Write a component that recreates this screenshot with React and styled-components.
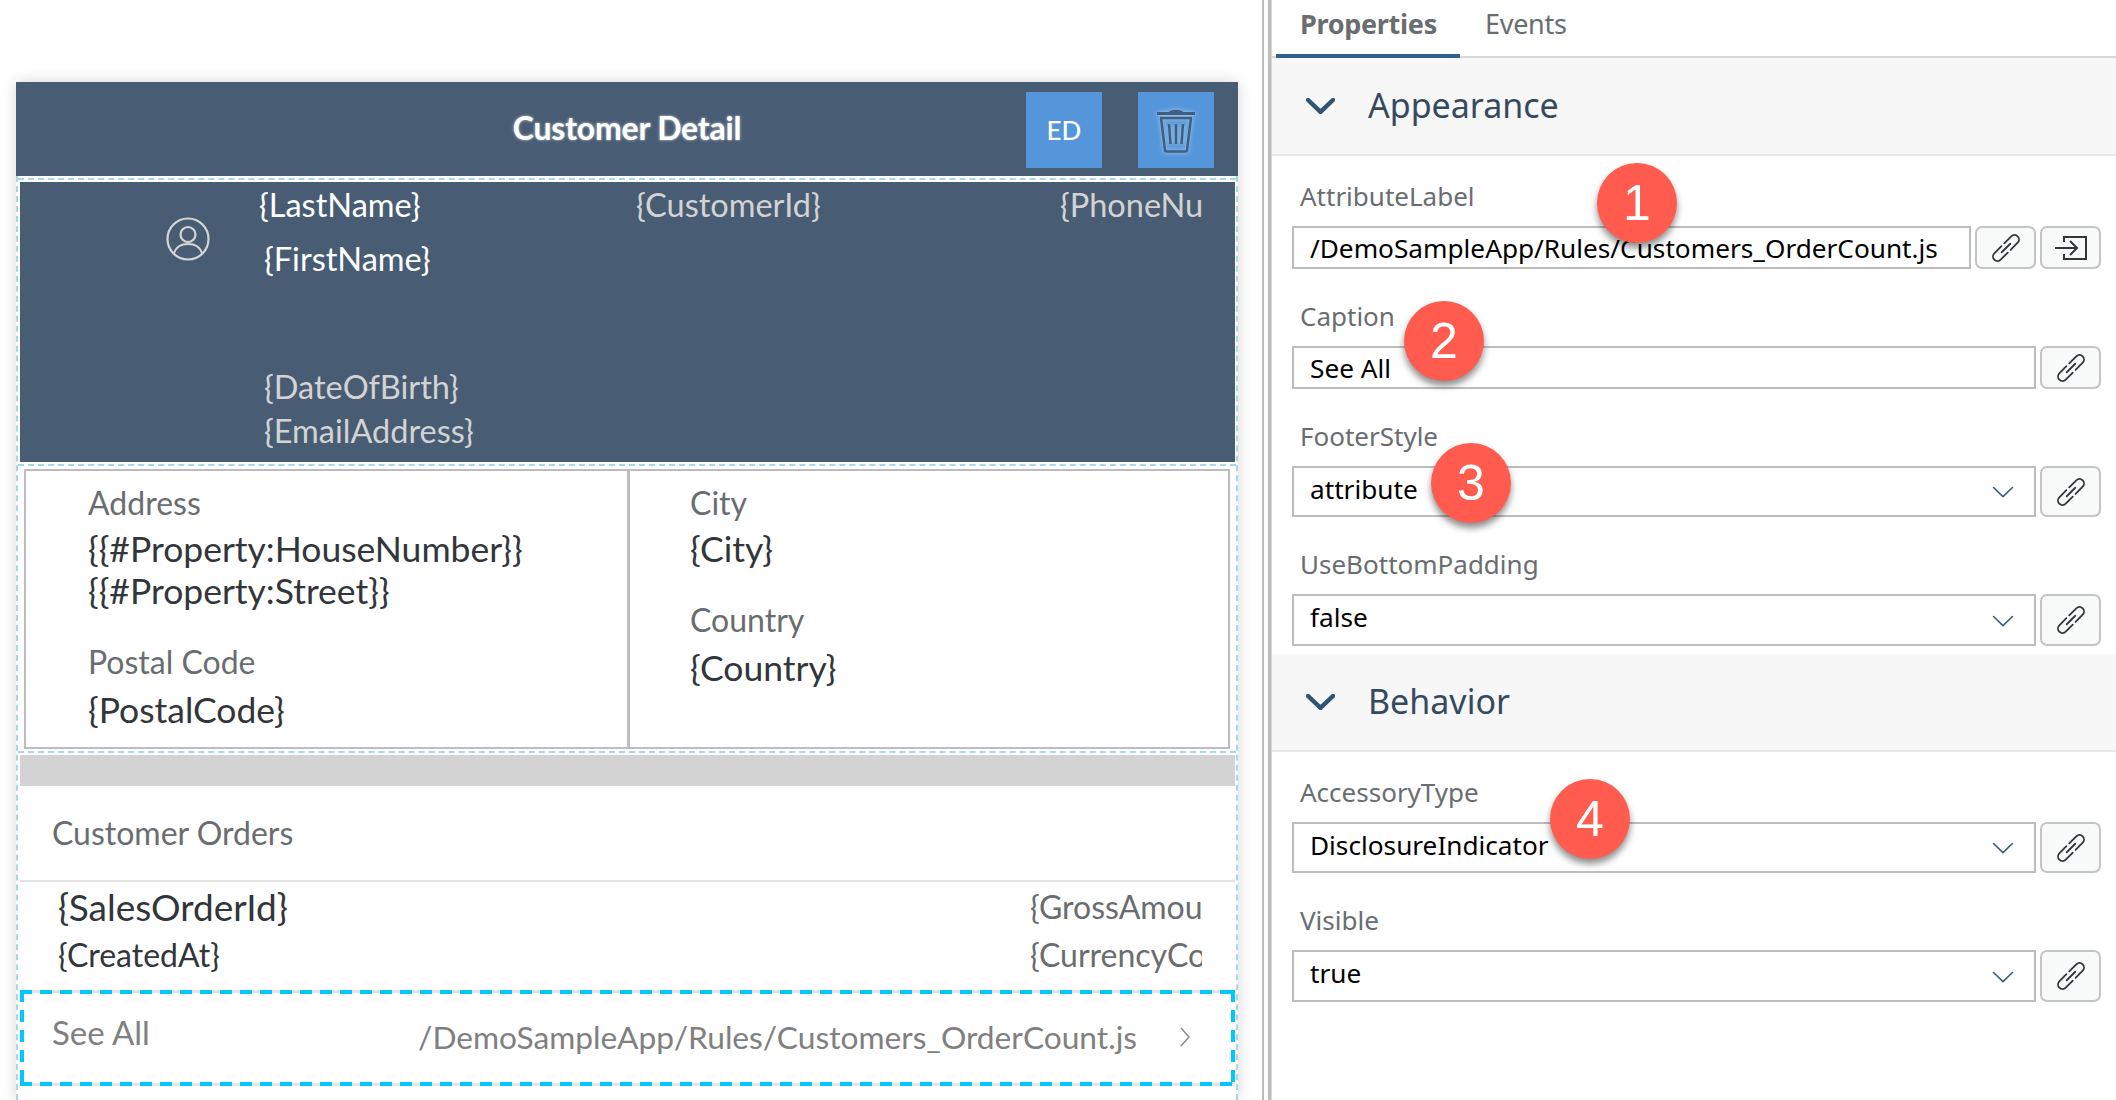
import React from 'react';
import styled, { createGlobalStyle } from 'styled-components';

const GlobalStyle = createGlobalStyle`
  html, body {
    margin: 0;
    height: 100%;
    background: #fff;
    overflow: hidden;
  }
`;

const Page = styled.div`
  position: relative;
  display: flex;
  width: 2116px;
  height: 1100px;
  overflow: hidden;
  background: #fff;
  font-family: 'Lato', sans-serif;
`;

const Canvas = styled.div`
  width: 1262px;
  flex: none;
  padding: 82px 24px 0 16px;
  box-sizing: border-box;
`;

const Device = styled.div`
  height: 1018px;
  display: flex;
  flex-direction: column;
  background: #fff;
  box-shadow: 0 0 14px rgba(0, 0, 0, 0.16);
`;

const ActionBar = styled.div`
  position: relative;
  height: 94px;
  flex: none;
  box-sizing: border-box;
  display: flex;
  align-items: center;
  justify-content: flex-end;
  gap: 36px;
  padding: 2px 24px 0 0;
  background: #485d74;
`;

const BarTitle = styled.div`
  position: absolute;
  left: 0;
  right: 0;
  top: 27px;
  text-align: center;
  font-size: 32px;
  line-height: 38px;
  font-weight: 700;
  letter-spacing: -0.2px;
  color: #fff;
  text-shadow: 0 0 3px rgba(255, 255, 255, 0.7);
`;

const BarButton = styled.div`
  width: 76px;
  height: 76px;
  display: flex;
  align-items: center;
  justify-content: center;
  background: #5596db;
  color: #fff;
  font-size: 26px;
  font-weight: 500;
`;

const Body = styled.div`
  flex: 1;
  display: flex;
  flex-direction: column;
  padding: 2px 1px 0 2px;
  border-left: 2px dashed #a8d8e8;
  border-right: 2px dashed #a8d8e8;
`;

const DashRule = styled.div`
  flex: none;
  margin: ${(p) => p.$margin || '0'};
  margin-left: -2px;
  margin-right: -1px;
  border-top: 2px dashed #a8d8e8;
`;

const DetailHeader = styled.div`
  height: 280px;
  flex: none;
  display: grid;
  grid-template-columns: 239px 377px 424px 142px;
  background: #485d74;
  color: #d3d3d3;
  font-size: 32.5px;
  line-height: 40px;
`;

const AvatarCell = styled.div`
  padding: 35px 0 0 146px;
  color: #d6d6d6;
`;

const TextCell = styled.div`
  padding-top: 3px;
  overflow: hidden;
  white-space: nowrap;
`;

const HeaderLine = styled.div`
  color: ${(p) => (p.$bright ? '#fff' : '#d3d3d3')};
  margin-left: ${(p) => p.$indent || 0}px;
  margin-top: ${(p) => p.$top || 0}px;
`;

const AddressBox = styled.div`
  height: 280px;
  flex: none;
  margin: 0 5px 0 4px;
  display: grid;
  grid-template-columns: 601px 1fr;
  box-sizing: border-box;
  border: 2px solid #bdbdbd;
`;

const AddressColumn = styled.div`
  display: flex;
  flex-direction: column;
  gap: 30px;
  padding: 12px 0 0 ${(p) => p.$pad}px;
  border-left: ${(p) => (p.$divided ? '3px solid #bdbdbd' : 'none')};
`;

const DataItem = styled.div`
  display: flex;
  flex-direction: column;
  gap: ${(p) => p.$gap}px;
`;

const DataLabel = styled.div`
  font-size: 32px;
  line-height: 40px;
  color: #6a6d70;
`;

const DataValue = styled.div`
  font-size: 35.5px;
  line-height: 42px;
  color: #32363a;
`;

const GapBand = styled.div`
  height: 31px;
  flex: none;
  background: #d3d3d3;
`;

const SectionTitle = styled.div`
  height: 96px;
  flex: none;
  display: flex;
  align-items: center;
  padding: 0 0 2px 32px;
  box-sizing: border-box;
  font-size: 32px;
  color: #6a6d70;
  border-bottom: 2px solid #e4e4e4;
`;

const OrderRow = styled.div`
  height: 108px;
  flex: none;
  display: flex;
  justify-content: space-between;
  padding: 5px 33px 0 38px;
  box-sizing: border-box;
`;

const OrderColumn = styled.div`
  display: flex;
  flex-direction: column;
  gap: 8px;
  width: ${(p) => p.$width || 'auto'};
  overflow: ${(p) => (p.$width ? 'hidden' : 'visible')};
  white-space: nowrap;
`;

const OrderText = styled.div`
  font-size: ${(p) => p.$size}px;
  line-height: 40px;
  color: ${(p) => p.$color};
`;

const FooterRow = styled.div`
  height: 96px;
  flex: none;
  display: flex;
  align-items: center;
  justify-content: space-between;
  padding: 0 44px 0 32px;
  box-sizing: border-box;
  background:
    repeating-linear-gradient(90deg, #00c8ff 0 12px, transparent 12px 20px) top / 100% 4px no-repeat,
    repeating-linear-gradient(90deg, #00c8ff 0 12px, transparent 12px 20px) bottom / 100% 4px no-repeat,
    repeating-linear-gradient(180deg, #00c8ff 0 12px, transparent 12px 20px) left / 4px 100% no-repeat,
    repeating-linear-gradient(180deg, #00c8ff 0 12px, transparent 12px 20px) right / 4px 100% no-repeat,
    linear-gradient(#e4e4e4, #e4e4e4) top / 100% 3px no-repeat,
    linear-gradient(#e4e4e4, #e4e4e4) bottom / 100% 3px no-repeat;
`;

const FooterCaption = styled.div`
  font-size: 33px;
  color: #808080;
  margin-top: -12px;
`;

const FooterRight = styled.div`
  display: flex;
  align-items: center;
  gap: 42px;
  margin-top: -3px;
  font-size: 31.7px;
  color: #808080;
`;

const Separators = styled.div`
  width: 10px;
  flex: none;
  box-sizing: border-box;
  border-left: 2px solid #bdbdbd;
  border-right: 1px solid #d8d8dc;
  background: linear-gradient(90deg, transparent 4px, #bdbdbd 4px);
`;

const Inspector = styled.div`
  flex: 1;
  display: flex;
  flex-direction: column;
  font-family: 'Noto Sans', sans-serif;
`;

const TabBar = styled.div`
  height: 58px;
  flex: none;
  box-sizing: border-box;
  display: flex;
  padding-left: 4px;
  border-bottom: 2px solid #d9d9d9;
`;

const Tab = styled.div`
  height: 58px;
  box-sizing: border-box;
  width: ${(p) => p.$width}px;
  padding-left: ${(p) => p.$pad}px;
  font-size: 27px;
  line-height: 48px;
  font-weight: ${(p) => (p.$active ? 700 : 400)};
  color: #6a6d70;
  letter-spacing: -0.3px;
  border-bottom: ${(p) => (p.$active ? '4px solid #2f5f8f' : 'none')};
`;

const GroupHeader = styled.div`
  height: 98px;
  flex: none;
  box-sizing: border-box;
  display: flex;
  align-items: center;
  gap: 33px;
  padding-left: 34px;
  background: #f7f7f7;
  border-bottom: 2px solid #e8e8e8;
  font-size: 34px;
  color: #354a5f;
`;

const GroupTitle = styled.span`
  margin-bottom: 2px;
`;

const FieldList = styled.div`
  display: flex;
  flex-direction: column;
  gap: 32px;
  padding: 25px 15px 0 20px;
  height: ${(p) => p.$height}px;
  box-sizing: border-box;
  flex: none;
`;

const Field = styled.div`
  display: flex;
  flex-direction: column;
  gap: 15px;
`;

const FieldLabel = styled.div`
  padding-left: 8px;
  font-size: 26px;
  line-height: 30px;
  color: #6a6d70;
`;

const ControlRow = styled.div`
  display: flex;
  gap: 4px;
  height: ${(p) => p.$height}px;
`;

const Control = styled.div`
  flex: 1;
  min-width: 0;
  display: flex;
  align-items: center;
  justify-content: space-between;
  box-sizing: border-box;
  padding: 0 20px 0 16px;
  border: 2px solid #bdbdbd;
  background: #fff;
  color: #000;
  font-size: 26.2px;
  white-space: nowrap;
`;

const ControlValue = styled.span`
  margin-bottom: ${(p) => (p.$select ? 6 : 0)}px;
`;

const ControlCaret = styled.span`
  display: flex;
  margin-top: 2px;
`;

const IconButton = styled.div`
  width: 61px;
  flex: none;
  display: flex;
  align-items: center;
  justify-content: center;
  box-sizing: border-box;
  border: 2px solid #c4c4c4;
  border-radius: 7px;
  background: #f8f9f9;
  color: #32363a;
`;

const Badge = styled.div`
  position: absolute;
  left: ${(p) => p.$x}px;
  top: ${(p) => p.$y}px;
  width: 80px;
  height: 80px;
  border-radius: 50%;
  display: flex;
  align-items: center;
  justify-content: center;
  background: #ff5b4e;
  color: #fff;
  font-family: 'Liberation Sans', sans-serif;
  font-size: 50px;
  box-shadow: 0 5px 7px rgba(0, 0, 0, 0.45);
`;

const Chevron = ({ size = 29, weight = 4.5, color = '#2f5573' }) => (
  <svg width={size} height={size * 0.55} viewBox="0 0 29 16" fill="none">
    <path d="M2 2l12.5 12L27 2" stroke={color} strokeWidth={weight} strokeLinecap="round" strokeLinejoin="round" />
  </svg>
);

const TrashIcon = () => (
  <svg width="38" height="46" viewBox="0 0 38 46" fill="none" style={{ filter: 'drop-shadow(0 0 2px rgba(255,255,255,0.55))' }}>
    <path d="M12 5c1-3 13-3 14 0z" fill="#3f5f80" />
    <path d="M0 6.5h38" stroke="#3f5f80" strokeWidth="3" />
    <path d="M3 11h32M4 11l4 32c0 1 1 1.500 2 1.500h18c1 0 2-.5 2-1.500l4-32" stroke="#3f5f80" strokeWidth="2.500" />
    <path d="M12 17l1.500 20M19 17v20M26 17l-1.500 20" stroke="#3f5f80" strokeWidth="2.500" />
  </svg>
);

const PersonIcon = () => (
  <svg width="44" height="44" viewBox="0 0 44 44" fill="none" stroke="currentColor" strokeWidth="2.200">
    <circle cx="22" cy="22" r="20.500" />
    <circle cx="22" cy="17.500" r="7.500" />
    <path d="M8 36c2-6 7-9 14-9s12 3 14 9" />
  </svg>
);

const ChainIcon = () => (
  <svg width="28" height="28" viewBox="0 0 28 28" fill="none" stroke="#32363a" strokeWidth="1.800" strokeLinecap="round">
    <g transform="rotate(45 14 14)">
      <path d="M9.500 12V2a4.500 4.500 0 0 1 9 0v10" />
      <path d="M18.500 16v10a4.500 4.500 0 0 1-9 0V16" />
      <path d="M14 8v12" />
    </g>
  </svg>
);

const ExitIcon = () => (
  <svg width="32" height="24" viewBox="0 0 32 24" fill="none" stroke="#32363a" strokeWidth="2">
    <path d="M9 6V1h22v22H9v-5" />
    <path d="M0 12h22M15 5l7 7-7 7" />
  </svg>
);

const Disclosure = () => (
  <svg width="12" height="22" viewBox="0 0 12 22" fill="none" stroke="#8a8a8a" strokeWidth="1.500" style={{ display: 'block' }}>
    <path d="M2 2l8 9-8 9" />
  </svg>
);

const PropertyField = ({ label, value, height, select, exit }) => (
  <Field>
    <FieldLabel>{label}</FieldLabel>
    <ControlRow $height={height}>
      <Control>
        <ControlValue $select={select}>{value}</ControlValue>
        {select && (
          <ControlCaret>
            <Chevron size={22} weight={2.2} color="#3a6080" />
          </ControlCaret>
        )}
      </Control>
      <IconButton>
        <ChainIcon />
      </IconButton>
      {exit && (
        <IconButton>
          <ExitIcon />
        </IconButton>
      )}
    </ControlRow>
  </Field>
);

export default function App() {
  return (
    <Page>
      <GlobalStyle />
      <Canvas>
        <Device>
          <ActionBar>
            <BarTitle>Customer Detail</BarTitle>
            <BarButton>ED</BarButton>
            <BarButton>
              <TrashIcon />
            </BarButton>
          </ActionBar>
          <Body>
            <DashRule $margin="0 0 2px" />
            <DetailHeader>
              <AvatarCell>
                <PersonIcon />
              </AvatarCell>
              <TextCell>
                <HeaderLine $bright>{'{LastName}'}</HeaderLine>
                <HeaderLine $bright $indent={5} $top={14}>{'{FirstName}'}</HeaderLine>
                <HeaderLine $indent={5} $top={88}>{'{DateOfBirth}'}</HeaderLine>
                <HeaderLine $indent={5} $top={4}>{'{EmailAddress}'}</HeaderLine>
              </TextCell>
              <TextCell>{'{CustomerId}'}</TextCell>
              <TextCell>{'{PhoneNumber}'}</TextCell>
            </DetailHeader>
            <DashRule $margin="2px 0 3px" />
            <AddressBox>
              <AddressColumn $pad={62}>
                <DataItem $gap={5}>
                  <DataLabel>Address</DataLabel>
                  <DataValue>
                    {'{{#Property:HouseNumber}}'}
                    <br />
                    {'{{#Property:Street}}'}
                  </DataValue>
                </DataItem>
                <DataItem $gap={7}>
                  <DataLabel>Postal Code</DataLabel>
                  <DataValue>{'{PostalCode}'}</DataValue>
                </DataItem>
              </AddressColumn>
              <AddressColumn $pad={60} $divided>
                <DataItem $gap={5}>
                  <DataLabel>City</DataLabel>
                  <DataValue>{'{City}'}</DataValue>
                </DataItem>
                <DataItem $gap={7}>
                  <DataLabel>Country</DataLabel>
                  <DataValue>{'{Country}'}</DataValue>
                </DataItem>
              </AddressColumn>
            </AddressBox>
            <DashRule $margin="2px 0 2px" />
            <GapBand />
            <SectionTitle>Customer Orders</SectionTitle>
            <OrderRow>
              <OrderColumn>
                <OrderText $size={37} $color="#32363a">{'{SalesOrderId}'}</OrderText>
                <OrderText $size={32} $color="#32363a">{'{CreatedAt}'}</OrderText>
              </OrderColumn>
              <OrderColumn $width="172px">
                <OrderText $size={32} $color="#6a6d70">{'{GrossAmount}'}</OrderText>
                <OrderText $size={32} $color="#6a6d70">{'{CurrencyCode}'}</OrderText>
              </OrderColumn>
            </OrderRow>
            <FooterRow>
              <FooterCaption>See All</FooterCaption>
              <FooterRight>
                /DemoSampleApp/Rules/Customers_OrderCount.js
                <Disclosure />
              </FooterRight>
            </FooterRow>
          </Body>
        </Device>
      </Canvas>
      <Separators />
      <Inspector>
        <TabBar>
          <Tab $active $width={184} $pad={24}>Properties</Tab>
          <Tab $width={120} $pad={25}>Events</Tab>
        </TabBar>
        <GroupHeader>
          <Chevron />
          <GroupTitle>Appearance</GroupTitle>
        </GroupHeader>
        <FieldList $height={498}>
          <PropertyField label="AttributeLabel" value="/DemoSampleApp/Rules/Customers_OrderCount.js" height={43} exit />
          <PropertyField label="Caption" value="See All" height={43} />
          <PropertyField label="FooterStyle" value="attribute" height={51} select />
          <PropertyField label="UseBottomPadding" value="false" height={52} select />
        </FieldList>
        <GroupHeader>
          <Chevron />
          <GroupTitle>Behavior</GroupTitle>
        </GroupHeader>
        <FieldList $height={348}>
          <PropertyField label="AccessoryType" value="DisclosureIndicator" height={51} select />
          <PropertyField label="Visible" value="true" height={52} select />
        </FieldList>
      </Inspector>
      <Badge $x={1597} $y={163}>1</Badge>
      <Badge $x={1404} $y={301}>2</Badge>
      <Badge $x={1431} $y={443}>3</Badge>
      <Badge $x={1550} $y={779}>4</Badge>
    </Page>
  );
}
